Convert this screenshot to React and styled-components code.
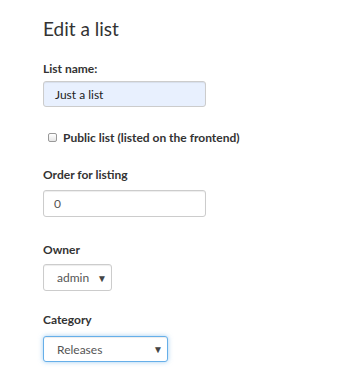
import React from "react";
import styled, { createGlobalStyle } from "styled-components";

const Global = createGlobalStyle`
  html, body { margin: 0; padding: 0; background: #fff; }
  body { font-family: Lato, "Noto Sans", sans-serif; color: #333; }
`;

const Page = styled.div`
  padding: 17px 0 0 43px;
  width: 341px;
  height: 381px;
  box-sizing: border-box;
`;

const Title = styled.h3`
  margin: 0 0 20px;
  font-size: 19px;
  line-height: 24px;
  font-weight: 400;
  color: #333;
`;

const Group = styled.div`
  display: flex;
  flex-direction: column;
  align-items: flex-start;
  margin-bottom: ${(p) => p.$mb ?? 22}px;
`;

const Label = styled.label`
  display: block;
  font-size: 12px;
  line-height: 15px;
  font-weight: 700;
  color: #333;
  margin-bottom: ${(p) => p.$mb ?? 5}px;
`;

const TextInput = styled.div`
  box-sizing: border-box;
  width: 163px;
  height: ${(p) => p.$h ?? 26}px;
  border: 1px solid ${(p) => (p.$focus ? "#66afe9" : "#ccc")};
  border-radius: 3px;
  background: ${(p) => (p.$autofill ? "#e8f0fe" : "#fff")};
  display: flex;
  align-items: center;
  padding: 0 ${(p) => p.$padX ?? 11}px;
  font-size: 12px;
  color: ${(p) => (p.$autofill ? "#222" : "#555")};
  box-shadow: ${(p) =>
    p.$focus
      ? "inset 0 1px 1px rgba(0,0,0,.075), 0 0 5px rgba(102,175,233,.6)"
      : "inset 0 1px 1px rgba(0,0,0,.075)"};
`;

const Select = styled(TextInput)`
  width: ${(p) => p.$w}px;
  padding: 0 4px 0 13px;
  justify-content: space-between;
`;

const Arrow = styled.span`
  font-size: 10px;
  color: #444;
`;

const CheckRow = styled.label`
  display: flex;
  align-items: center;
  gap: 6px;
  padding-left: 5px;
  font-size: 12px;
  font-weight: 700;
  color: #333;
  margin: 0 0 22px;
`;

const Box = styled.span`
  box-sizing: border-box;
  width: 9px;
  height: 9px;
  border: 1px solid #999;
  border-radius: 2px;
  background: linear-gradient(#fff, #e6e6e6);
`;

export default function App() {
  return (
    <>
      <Global />
      <Page>
        <Title>Edit a list</Title>
        <Group $mb={23}>
          <Label>List name:</Label>
          <TextInput $autofill>Just a list</TextInput>
        </Group>
        <CheckRow>
          <Box />
          Public list (listed on the frontend)
        </CheckRow>
        <Group $mb={25}>
          <Label $mb={8}>Order for listing</Label>
          <TextInput $padX={10} $h={27}>0</TextInput>
        </Group>
        <Group $mb={21}>
          <Label $mb={7}>Owner</Label>
          <Select $w={69} $h={27}>
            admin <Arrow>▼</Arrow>
          </Select>
        </Group>
        <Group>
          <Label $mb={9}>Category</Label>
          <Select $w={125} $focus>
            Releases <Arrow>▼</Arrow>
          </Select>
        </Group>
      </Page>
    </>
  );
}
